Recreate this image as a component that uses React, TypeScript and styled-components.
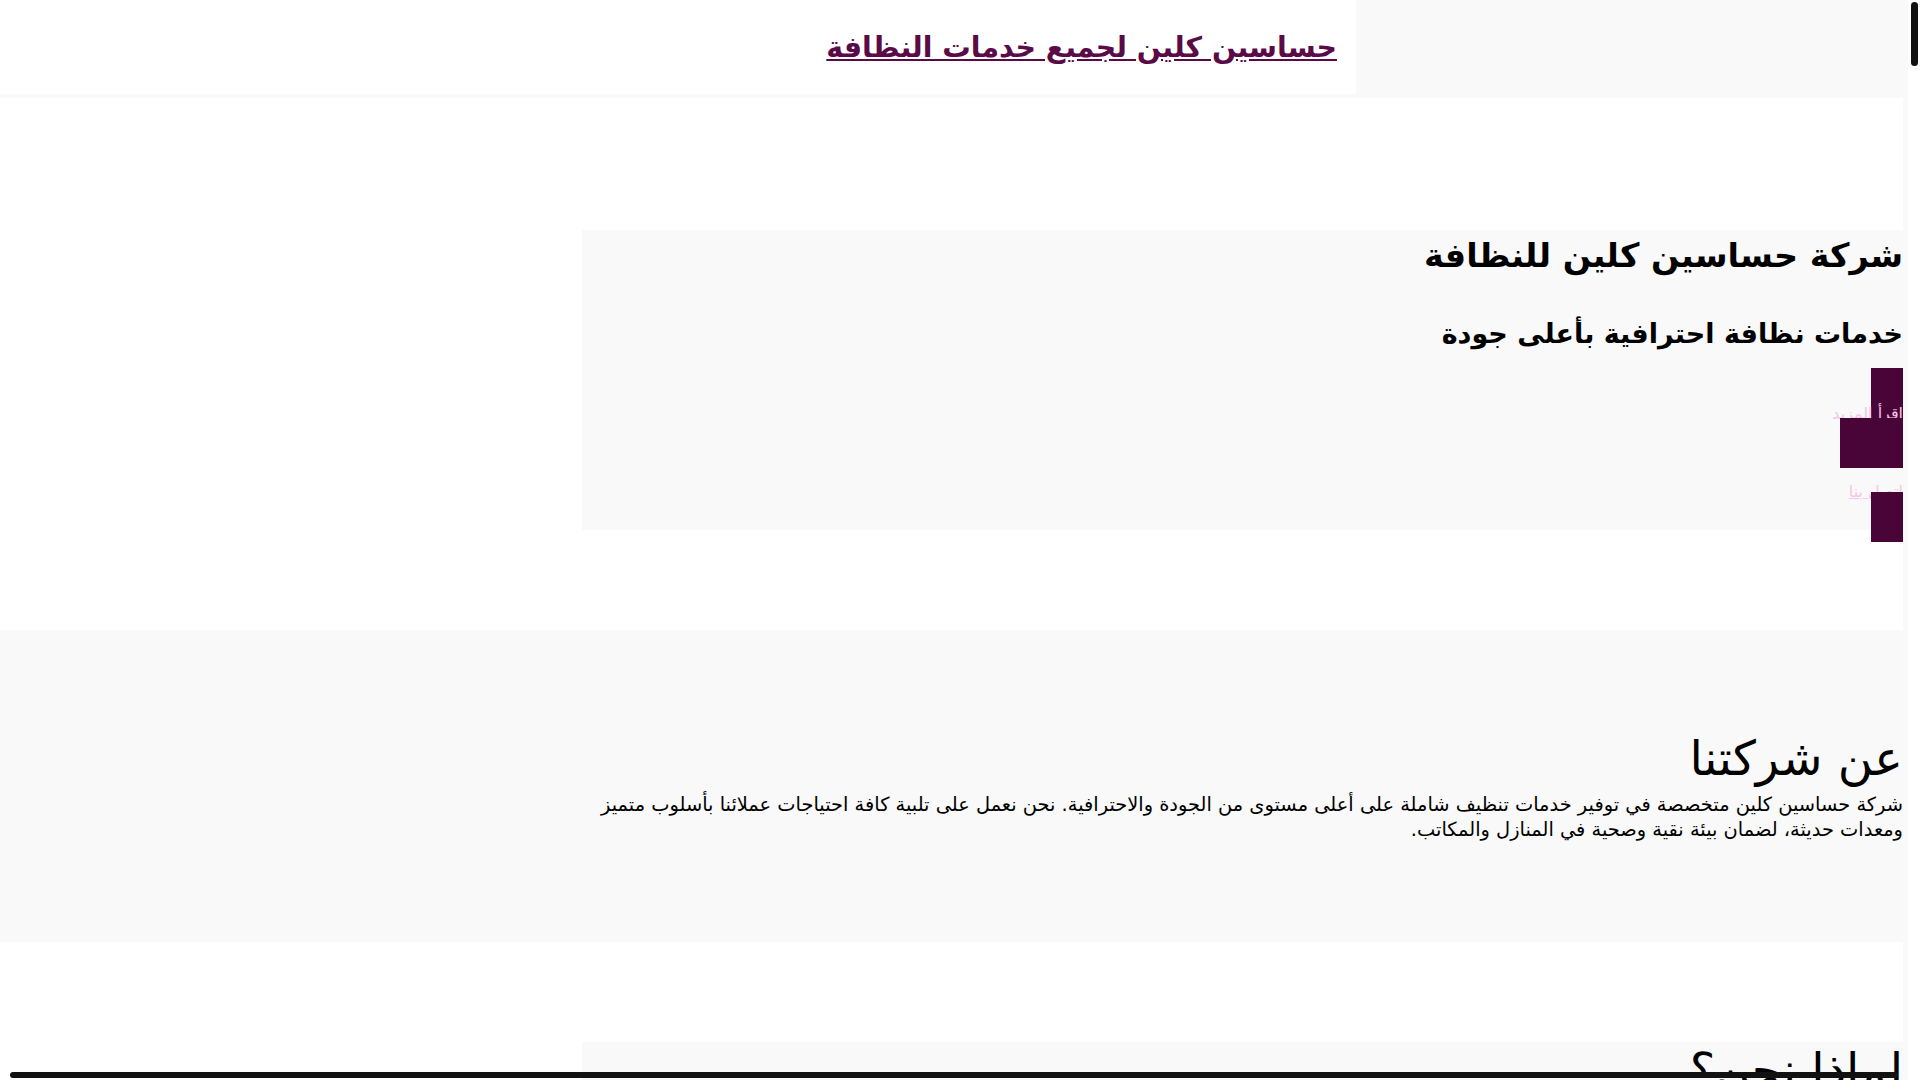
import React from "react";
import styled, { createGlobalStyle } from "styled-components";

const GlobalStyle = createGlobalStyle`
  html, body {
    margin: 0;
    padding: 0;
    background: #f9f9f9;
  }
  body {
    direction: rtl;
    font-family: "DejaVu Sans", "Noto Sans", sans-serif;
    color: #000;
  }
`;

const Page = styled.div`
  display: flex;
  flex-direction: column;
  margin-right: 17px;
  min-height: 17700px;
`;

/* scroll indicators drawn over the page edges */
const VRail = styled.div`
  position: fixed;
  top: 0;
  right: 0;
  width: 12px;
  height: 100vh;
  background: #fff;
  z-index: 10;
`;

const VThumb = styled.div`
  position: absolute;
  top: 2px;
  right: 2px;
  width: 7px;
  height: 64px;
  border-radius: 4px;
  background: #111;
`;

const HThumb = styled.div`
  position: fixed;
  left: 10px;
  bottom: 2px;
  width: 1888px;
  height: 6px;
  border-radius: 3px;
  background: #111;
  z-index: 10;
`;

const Header = styled.header`
  align-self: flex-end;
  width: 1356px;
  height: 94px;
  display: flex;
  align-items: center;
  padding: 0 19px;
  box-sizing: border-box;
  background: #fff;
`;

const Brand = styled.a`
  font-size: 28.4px;
  font-weight: bold;
  color: #5b0a48;
  text-decoration: underline;
`;

const Section = styled.section<{ $tone?: "white" | "grey"; $hero?: boolean }>`
  margin-top: ${(p) => (p.$hero ? "4px" : "0")};
  padding: ${(p) => (p.$hero ? "132px 0 100px" : "100px 0")};
  background: ${(p) => (p.$tone === "grey" ? "#f9f9f9" : "#fff")};
`;

const Container = styled.div<{ $fill?: boolean; $height?: number }>`
  max-width: 1321px;
  ${(p) => (p.$height ? `height: ${p.$height}px;` : "")}
  background: ${(p) => (p.$fill ? "#f9f9f9" : "transparent")};
`;

const HeroTitle = styled.h1`
  margin: 0;
  font-size: 33.4px;
  line-height: 52px;
  font-weight: bold;
`;

const HeroSubtitle = styled.h2`
  margin: 36px 0 0;
  font-size: 27px;
  font-weight: bold;
`;

const CtaStack = styled.div`
  display: flex;
  flex-direction: column;
  align-items: flex-start;
  margin-top: 19px;
`;

const Cap = styled.span<{ $w: number; $gap: number }>`
  display: block;
  width: ${(p) => p.$w}px;
  height: 50px;
  margin-top: ${(p) => p.$gap}px;
  background: #4a0538;
`;

const CtaLink = styled.a<{ $gap: number; $line?: boolean }>`
  display: block;
  margin-top: ${(p) => p.$gap}px;
  font-size: 16px;
  line-height: 19px;
  color: #f7c6e7;
  text-decoration: ${(p) => (p.$line ? "underline" : "none")};
  white-space: nowrap;
`;

const SectionTitle = styled.h2`
  margin: 0 0 6px;
  font-size: 48px;
  font-weight: normal;
`;

const Text = styled.p`
  margin: 0;
  font-size: 19.4px;
  line-height: 25px;
`;

const FeatureList = styled.ul`
  margin: 0;
  padding: 0 24px 0 0;
  font-size: 19.4px;
  line-height: 30px;
`;

const Footer = styled.footer`
  padding: 40px 0;
  background: #fff;
  font-size: 15px;
`;

const features = [
  "فريق عمل مدرب ومحترف",
  "استخدام مواد تنظيف آمنة وصديقة للبيئة",
  "معدات حديثة وتقنيات متطورة",
  "أسعار منافسة وعروض مستمرة",
  "الالتزام بالمواعيد وخدمة على مدار الساعة",
];

export default function App() {
  return (
    <>
      <GlobalStyle />
      <Page>
        <Header>
          <Brand href="#">حساسين كلين لجميع خدمات النظافة</Brand>
        </Header>

        <Section $hero>
          <Container $fill $height={300}>
            <HeroTitle>شركة حساسين كلين للنظافة</HeroTitle>
            <HeroSubtitle>خدمات نظافة احترافية بأعلى جودة</HeroSubtitle>
            <CtaStack>
              <Cap $w={32} $gap={0} />
              <CtaLink href="#about" $gap={-14}>
                اقرأ المزيد
              </CtaLink>
              <Cap $w={63} $gap={-5} />
              <CtaLink href="#contact" $gap={14} $line>
                اتصل بنا
              </CtaLink>
              <Cap $w={32} $gap={-9} />
            </CtaStack>
          </Container>
        </Section>

        <Section $tone="grey" id="about">
          <Container>
            <SectionTitle>عن شركتنا</SectionTitle>
            <Text>
              شركة حساسين كلين متخصصة في توفير خدمات تنظيف شاملة على أعلى مستوى من
              الجودة والاحترافية. نحن نعمل على تلبية كافة احتياجات عملائنا بأسلوب
              متميز ومعدات حديثة، لضمان بيئة نقية وصحية في المنازل والمكاتب.
            </Text>
          </Container>
        </Section>

        <Section>
          <Container $fill>
            <SectionTitle>لماذا نحن؟</SectionTitle>
            <FeatureList>
              {features.map((f) => (
                <li key={f}>{f}</li>
              ))}
            </FeatureList>
          </Container>
        </Section>

        <Footer id="contact">جميع الحقوق محفوظة © حساسين كلين</Footer>
      </Page>
      <VRail>
        <VThumb />
      </VRail>
      <HThumb />
    </>
  );
}
